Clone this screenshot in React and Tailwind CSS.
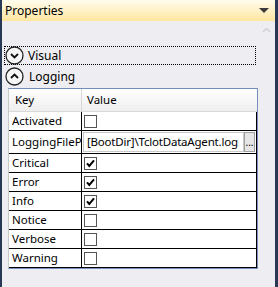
import React from "react";

function Check({ checked }) {
  return (
    <svg width="13" height="13" viewBox="0 0 13 13" className="block">
      <rect x="0.5" y="0.5" width="12" height="12" fill="#fff" stroke="#555" />
      {checked && (
        <path d="M3 6.3 L5.3 9 L10 3.3" fill="none" stroke="#000" strokeWidth="2" />
      )}
    </svg>
  );
}

function CircleChevron({ up }) {
  return (
    <svg width="19" height="19" viewBox="0 0 19 19" className="block">
      <circle cx="9.5" cy="9.5" r="8.5" fill="#f7f7f7" stroke="#222" strokeWidth="1.3" />
      <path
        d={up ? "M6 11 L9.5 7.5 L13 11" : "M6 8 L9.5 11.5 L13 8"}
        fill="none"
        stroke="#111"
        strokeWidth="1.8"
      />
    </svg>
  );
}

const rows = [
  { key: "Activated", checked: false },
  { key: "LoggingFileP", file: "[BootDir]\\TclotDataAgent.log" },
  { key: "Critical", checked: true },
  { key: "Error", checked: true },
  { key: "Info", checked: true },
  { key: "Notice", checked: false },
  { key: "Verbose", checked: false },
  { key: "Warning", checked: false },
];

export default function App() {
  return (
    <div
      className="w-[278px] h-[287px] bg-[#293955] pl-[2px] pr-[3px] flex flex-col text-[11.5px] text-black overflow-hidden"
      style={{ fontFamily: '"Noto Sans", "Open Sans", sans-serif' }}
    >
      <div className="h-[21px] shrink-0 bg-gradient-to-b from-[#fffcee] to-[#ffe69e] flex items-center justify-between pl-[3px] pr-[6px]">
        <span className="leading-none text-[12px]">Properties</span>
        <svg width="10" height="6" viewBox="0 0 10 6">
          <path d="M0 0 H10 L5 5 Z" fill="#3a3a3a" />
        </svg>
      </div>

      <div className="flex-1 bg-[#eeeef2] flex">
        <div className="w-[255px] shrink-0 flex flex-col">
          <div className="h-[25px]" />
          <div className="ml-[2px] w-[252px] h-[19px] border border-dotted border-black flex items-center gap-[4px]">
            <CircleChevron />
            <span className="leading-none text-[12px]">Visual</span>
          </div>
          <div className="ml-[2px] h-[23px] flex items-center gap-[5px] pl-px">
            <CircleChevron up />
            <span className="leading-none text-[12px]">Logging</span>
          </div>

          <div className="ml-[6px] w-[250px] border border-[#7590b8] border-l-[#c8c8c8] bg-white">
            <div className="h-[23px] flex bg-gradient-to-b from-[#ffffff] to-[#eeeeee] border-b border-[#d8d8d8]">
              <div className="w-[73px] border-r border-[#d8d8d8] pl-[6px] flex items-center">Key</div>
              <div className="pl-[5px] flex items-center">Value</div>
            </div>
            <div className="border-r border-black">
              {rows.map((r) => (
                <div
                  key={r.key}
                  className={`flex border-b border-black ${r.file ? "h-[23px]" : "h-[19px]"}`}
                >
                  <div className="w-[73px] shrink-0 border-r border-black pl-[3px] flex items-center overflow-hidden whitespace-nowrap">
                    {r.key}
                  </div>
                  {r.file ? (
                    <div className="flex-1 flex items-center pl-px pr-px">
                      <div className="flex-1 h-[20px] border border-[#c8c8c8] pl-[3px] flex items-center whitespace-nowrap overflow-hidden tracking-[-0.2px]">
                        {r.file}
                      </div>
                      <div className="w-[11px] h-[20px] border border-[#a0a0a0] bg-[#e6e6e6] flex items-end justify-center pb-[4px] text-[10px] leading-none">
                        ...
                      </div>
                    </div>
                  ) : (
                    <div className="flex-1 flex items-center pl-[2px]">
                      <Check checked={r.checked} />
                    </div>
                  )}
                </div>
              ))}
            </div>
          </div>
        </div>

        <div className="flex-1 flex justify-center pt-[6px]">
          <svg width="9" height="6" viewBox="0 0 9 6">
            <path d="M1 5 L4.5 1.5 L8 5" fill="none" stroke="#d0d0d8" strokeWidth="1.5" />
          </svg>
        </div>
      </div>
    </div>
  );
}
